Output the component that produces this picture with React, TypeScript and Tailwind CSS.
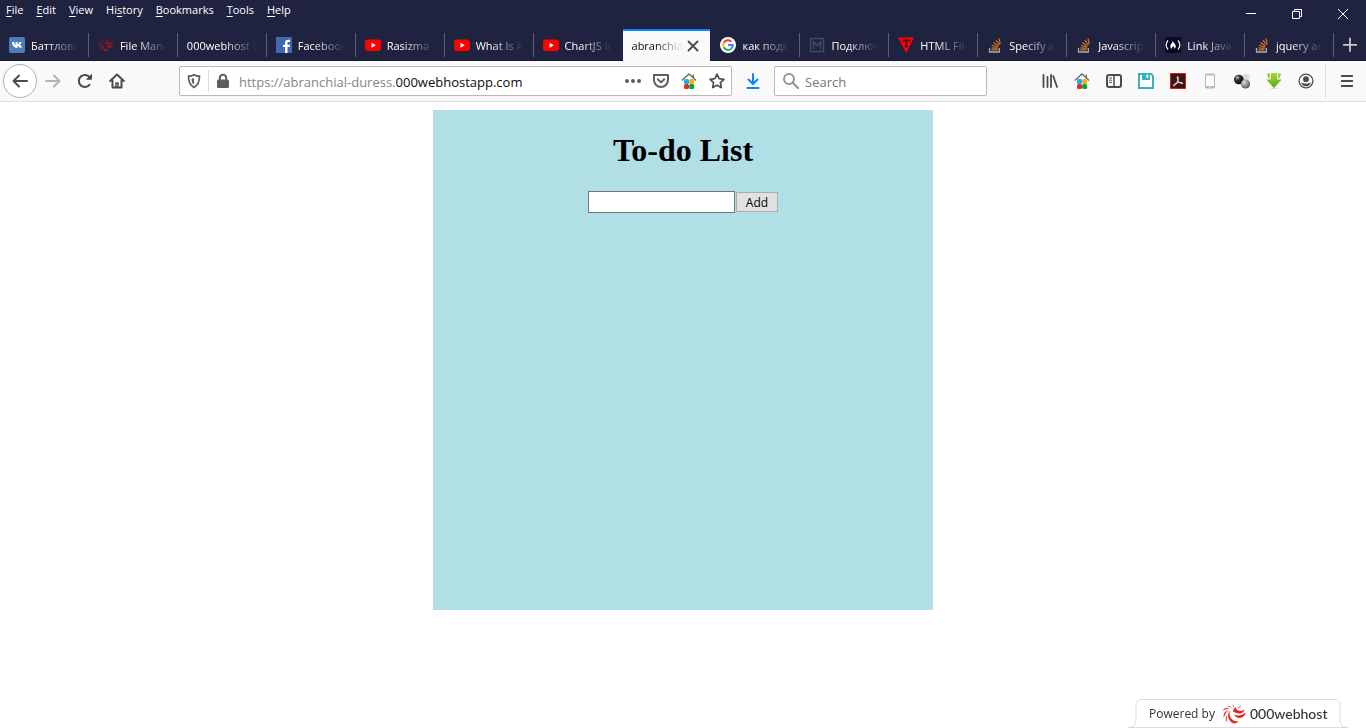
import type { ReactNode } from "react";

const UI = "font-['Open_Sans','Noto_Sans',sans-serif]";

/* ---------- favicons ---------- */

const Vk = () => (
  <svg viewBox="0 0 16 16" className="size-4 shrink-0">
    <rect width="16" height="16" rx="2" fill="#4d7db8" />
    <path d="M1.800 5h2.100c.2 1.600.9 2.700 1.400 2.900V5h2.200v2.300c.7-.2 1.500-1.300 1.800-2.300h2.100c-.3 1.200-1.100 2.100-1.900 2.600.9.4 1.800 1.400 2.200 3.200H9.400c-.4-1.100-1.100-1.900-1.900-2v2h-.6C4 10.800 1.900 8.800 1.800 5z" transform="translate(1.200)" fill="#fff" />
  </svg>
);

const Swirl = ({ className, color }: { className: string; color: string }) => (
  <svg viewBox="0 0 24 20" className={className} fill={color}>
    <path d="M8.500 6.500C6.800 9.300 7.400 12.800 9.600 15c1.600 1.600 3.800 2.500 6.700 2.300-1.300 2.500-4.400 2.700-6.600 1.100C5.700 15.600 4.700 9.800 8.500 6.500z" />
    <path d="M12.300 10.500c3 1.800 7.200 1.400 11.500-2-.9 3.600-3.400 5.500-6.400 5.500-2.500 0-4.500-1.300-5.100-3.500z" />
    <path d="M11 7.500c.4-2.200 1.500-3.500 2.700-4.400 0 2 1.500 3.400 3.600 3.700 1.900.3 3.800-.2 5.200-1.600-.6 3-2.700 4.300-5.300 4.200C14.800 9.300 13 8.600 11 7.500z" />
    <path d="M7 6.200C4 8.200 2.300 10.500 2 14 .7 10 2.800 6.800 7 6.200zM5.200 11c-.9 2.300-.7 4.800.3 7.200-2.200-1.700-2.400-5-.3-7.200zM7.800 5.200C5 4.500 2.500 5.200.6 7.300 1.800 4 4.800 2.900 7.800 5.200zM9.700 4.800C8.500 3 7 2.200 4.800 2.400c2.100-1.300 4.500-.2 4.900 2.400zM11.500 4.200C11.600 2.700 11 1.500 9.600.5c2.100.5 2.900 2.200 1.900 3.700zM15 3.200c1.700.2 3-.4 3.800-1.900.1 2.200-1.900 3.300-3.800 1.900z" />
  </svg>
);

const FacebookIcon = () => (
  <svg viewBox="0 0 16 16" className="size-4 shrink-0">
    <rect width="16" height="16" fill="#4267b2" />
    <path d="M9 16V10H7V7.700h2V6c0-2.200 1.200-3.300 3.200-3.300H14V5h-1.200c-1 0-1.300.4-1.300 1.300v1.400H14l-.4 2.300h-2.100v6z" fill="#fff" />
  </svg>
);

const Youtube = () => (
  <svg viewBox="0 0 16 16" className="size-4 shrink-0">
    <rect y="2.500" width="16" height="11.500" rx="3" fill="#f00" />
    <path d="M6.500 5.700v5l4.300-2.500z" fill="#fff" />
  </svg>
);

const Google = () => (
  <svg viewBox="0 0 16 16" className="size-4 shrink-0" fill="none" strokeWidth="2">
    <circle cx="8" cy="8" r="8" fill="#fff" />
    <path d="M11.500 4.600A4.900 4.900 0 0 0 3.700 5.700" stroke="#ea4335" />
    <path d="M3.700 5.700a4.900 4.900 0 0 0 0 4.600" stroke="#fbbc05" />
    <path d="M3.700 10.300a4.900 4.900 0 0 0 7.500 1.400" stroke="#34a853" />
    <path d="M11.200 11.700A4.900 4.900 0 0 0 12.800 8H8" stroke="#4285f4" />
  </svg>
);

const Metanit = () => (
  <svg viewBox="0 0 16 16" className="size-4 shrink-0" fill="none" stroke="#3f4e63">
    <path d="M1.500 1.500h13v13h-13z" strokeWidth="1.500" />
    <path d="M4.500 12V5L8 8.500 11.500 5v7" strokeWidth="1.600" />
  </svg>
);

const RedTriangle = () => (
  <svg viewBox="0 0 16 16" className="size-4 shrink-0">
    <path d="M0 .5h16L8.300 16z" fill="#f00" />
    <path d="M4.500 2.500h7.300v2.200h-1V3.900H9.200v5.300H10v1H6.500v-1h.8V3.900H5.600v.8H4.500z" fill="#3a0e22" />
  </svg>
);

const StackOverflow = () => (
  <svg viewBox="0 0 16 16" className="size-4 shrink-0" fill="none">
    <path d="M2.500 11v4h9.800v-4" stroke="#a9abb3" strokeWidth="1.300" />
    <path d="M4.300 12.800h6.200M4.500 10.800l6.200.6M5 8.200l5.900 2M6.500 5.500l5 3.700M9 3.200l3.400 4.800M12 1.500l1.200 5.500" stroke="#d9701f" strokeWidth="1.200" />
  </svg>
);

const Fcc = () => (
  <svg viewBox="0 0 16 16" className="size-4 shrink-0" fill="none" stroke="#fff">
    <rect width="16" height="16" fill="#0a0a23" stroke="none" />
    <path d="M3 3.500Q-.7 8 3 12.500M13 3.500Q16.700 8 13 12.500" strokeWidth="1.200" />
    <path d="M7.600 4c.8 1.600 3.200 3.200 3.200 5.300 0 1.200-.6 2-1.400 2.600.1-1.300-.4-2-1.200-2.900-.7.900-1.500 1.500-1.300 2.900C5 11 4.800 9 6 7.300 6.800 6.200 7.700 5.500 7.600 4z" fill="#fff" stroke="none" />
  </svg>
);

/* ---------- toolbar icons ---------- */

const Line = ({ children, color = "#4a4a4f", className = "size-4" }: { children: ReactNode; color?: string; className?: string }) => (
  <svg viewBox="0 0 16 16" className={`${className} shrink-0`} fill="none" stroke={color} strokeWidth="2" strokeLinecap="round" strokeLinejoin="round">
    {children}
  </svg>
);

const ColorHouse = () => (
  <svg viewBox="0 0 16 16" className="size-4 shrink-0">
    <path d="M.8 7.500L8 1l7.200 6.500M12.300 4.500V1.500" fill="none" stroke="#6a6a6a" strokeWidth="1.300" />
    <rect x="3" y="6" width="5" height="5" rx="1.500" fill="#12b0f0" />
    <rect x="8.200" y="6" width="5" height="5" rx="1.500" fill="#fbac12" />
    <rect x="3" y="11" width="5" height="5" rx="1.500" fill="#e22c1c" />
    <rect x="8.200" y="11" width="5" height="5" rx="1.500" fill="#12a03c" />
  </svg>
);

const Library = () => (
  <svg viewBox="0 0 16 16" className="size-4" fill="none" stroke="#4a4a4f" strokeLinecap="round">
    <path d="M1.500 2v12M5.500 4v10M9 2v12M11.300 3.200L15 14" strokeWidth="1.800" />
  </svg>
);

const SidebarIcon = () => (
  <Line>
    <rect x="1" y="2" width="14" height="12" rx="2" />
    <path d="M8 2v12" strokeWidth="1.500" />
    <path d="M3.500 5h2M3.500 7.200h2M3.500 9.400h2" strokeWidth="1" />
  </Line>
);

const Floppy = () => (
  <svg viewBox="0 0 16 16" className="size-4">
    <path d="M0 0h13.500L16 2.500V16H0z" fill="#36b3b7" />
    <path d="M2 2h2v5h8V2h.7L14 3.300V14H2z" fill="#fff" />
    <path d="M8.500 1.500h1.700v3.300H8.500z" fill="#fff" />
  </svg>
);

const Acrobat = () => (
  <svg viewBox="0 0 16 16" className="size-4" fill="none">
    <path d="M.5.500h15v15H.5z" fill="#3a1517" stroke="#cc1f12" />
    <path d="M3.500 12.800c-1-.9 1.600-2.400 4-2.900 2.600-.6 5.300-.5 5.200.5-.2 1.200-3.100-.6-4.500-2.900-1-1.600-1.400-4-.5-4 1.100 0 .4 3.300-.6 5.600-1 2.300-2.700 4.400-3.600 3.700z" stroke="#f1e9e9" strokeWidth="1" />
  </svg>
);

const Phone = () => (
  <svg viewBox="0 0 16 16" className="size-4">
    <rect x="3" y=".5" width="10" height="15" rx="1.500" fill="#b9b9b9" />
    <path d="M4 2.500h8v10.500H4z" fill="#fdfdfd" />
    <circle cx="8" cy="14.200" r=".7" fill="#f4f4f4" />
  </svg>
);

const Balls = () => (
  <svg viewBox="0 0 16 16" className="size-4">
    <defs>
      <radialGradient id="ball-dark" cx=".35" cy=".3" r=".7"><stop offset="0" stopColor="#bbb" /><stop offset=".4" stopColor="#333" /><stop offset="1" stopColor="#0c0c0c" /></radialGradient>
      <radialGradient id="ball-mid" cx=".35" cy=".3" r=".8"><stop offset="0" stopColor="#ddd" /><stop offset="1" stopColor="#494949" /></radialGradient>
    </defs>
    <circle cx="12" cy="4.500" r="3.700" fill="#dedede" />
    <circle cx="4.800" cy="6.500" r="4.800" fill="url(#ball-dark)" />
    <circle cx="11.500" cy="11" r="4.600" fill="url(#ball-mid)" />
  </svg>
);

const GreenArrow = () => (
  <svg viewBox="0 0 16 16" className="size-4">
    <defs>
      <linearGradient id="arrow-green" x2="0" y2="1"><stop offset="0" stopColor="#a5d936" /><stop offset="1" stopColor="#63a512" /></linearGradient>
    </defs>
    <ellipse cx="8" cy="15.300" rx="4" ry=".6" fill="#d5d5d5" />
    <path d="M4.800 0h6.400v6.500h4.600L8 15 .2 6.500h4.600z" fill="url(#arrow-green)" />
    <path d="M1 .5h2.800v4.800H2.500zM15 .5h-2.800v4.800h1.300z" fill="#91c82c" />
  </svg>
);

const Account = () => (
  <svg viewBox="0 0 16 16" className="size-4">
    <circle cx="8" cy="8" r="6.900" fill="none" stroke="#4a4a4f" strokeWidth="1.300" />
    <circle cx="8" cy="6.200" r="2.900" fill="#4a4a4f" />
    <path d="M3.300 9.300c1 1 2.800 1.400 4.700 1.400s3.700-.4 4.700-1.400c-.2 2.500-2.200 4-4.700 4s-4.500-1.500-4.700-4z" fill="#4a4a4f" />
  </svg>
);

/* ---------- data ---------- */

const menus: [string, string, string][] = [
  ["", "F", "ile"],
  ["", "E", "dit"],
  ["", "V", "iew"],
  ["Hi", "s", "tory"],
  ["", "B", "ookmarks"],
  ["", "T", "ools"],
  ["", "H", "elp"],
];

const tabs: { title: string; icon?: ReactNode; active?: boolean }[] = [
  { title: "Баттловы", icon: <Vk /> },
  { title: "File Mana", icon: <Swirl className="h-4 w-4 shrink-0" color="#b80d14" /> },
  { title: "000webhost F" },
  { title: "Facebook", icon: <FacebookIcon /> },
  { title: "Rasizmə Y", icon: <Youtube /> },
  { title: "What Is A", icon: <Youtube /> },
  { title: "ChartJS in", icon: <Youtube /> },
  { title: "abranchial", active: true },
  { title: "как подкл", icon: <Google /> },
  { title: "Подключ", icon: <Metanit /> },
  { title: "HTML File", icon: <RedTriangle /> },
  { title: "Specify a", icon: <StackOverflow /> },
  { title: "Javascrip", icon: <StackOverflow /> },
  { title: "Link Java", icon: <Fcc /> },
  { title: "jquery an", icon: <StackOverflow /> },
];

const extensions: [string, ReactNode][] = [
  ["Library", <Library />],
  ["Start page", <ColorHouse />],
  ["Sidebars", <SidebarIcon />],
  ["Save", <Floppy />],
  ["Adobe Acrobat", <Acrobat />],
  ["Mobile view", <Phone />],
  ["Proxy", <Balls />],
  ["Video downloader", <GreenArrow />],
  ["Account", <Account />],
];

const ToolButton = ({ label, children, className = "w-8" }: { label: string; children: ReactNode; className?: string }) => (
  <button type="button" aria-label={label} className={`flex h-8 shrink-0 items-center justify-center ${className}`}>
    {children}
  </button>
);

function TitleBar() {
  return (
    <div className="flex h-[29px] items-start justify-between text-white">
      <nav className="flex gap-[13px] pl-1.5 pt-0.5 text-[11px] leading-4">
        {menus.map(([before, key, after]) => (
          <button type="button" key={before + key + after}>
            {before}
            <span className="underline underline-offset-2">{key}</span>
            {after}
          </button>
        ))}
      </nav>
      <div className="flex h-7">
        {[
          ["Minimize", "M3 7.500h10"],
          ["Restore", "M3.500 5.500h7v7h-7zM5.500 5.500v-2h7v7h-2"],
          ["Close", "M3 3l10 10M13 3L3 13"],
        ].map(([label, d]) => (
          <button type="button" key={label} aria-label={label} className="flex w-[46px] items-center justify-center">
            <svg viewBox="0 0 16 16" className="size-4" fill="none" stroke="#fff"><path d={d} /></svg>
          </button>
        ))}
      </div>
    </div>
  );
}

function TabStrip() {
  return (
    <div className="flex h-8 text-[11px] leading-4">
      <div role="tablist" className="grid min-w-0 flex-1 grid-cols-[repeat(15,minmax(0,1fr))]">
        {tabs.map((tab, i) =>
          tab.active ? (
            <div key={i} className="mr-px flex items-center border-t-2 border-[#0a84ff] bg-[#f9f9fa] pl-[9px] pr-[9px] text-[#0c0c0d]">
              <button type="button" role="tab" aria-selected="true" className="min-w-0 flex-1 overflow-hidden whitespace-nowrap text-left [mask-image:linear-gradient(to_left,transparent,black_28px)]">
                {tab.title}
              </button>
              <button type="button" aria-label="Close tab" className="shrink-0 pl-0.5">
                <svg viewBox="0 0 16 16" className="size-4" fill="none" stroke="#4a4a4f" strokeWidth="1.800" strokeLinecap="round"><path d="M3.500 3.500l9 9M12.500 3.500l-9 9" /></svg>
              </button>
            </div>
          ) : (
            <div key={i} className="flex items-center border-b border-[#15172e] text-white">
              <button type="button" role="tab" aria-selected="false" className="flex min-w-0 flex-1 items-center gap-1.5 pl-[9px] pr-2.5 text-left">
                {tab.icon}
                <span className="min-w-0 flex-1 overflow-hidden whitespace-nowrap pt-0.5 [mask-image:linear-gradient(to_left,transparent,black_32px)]">{tab.title}</span>
              </button>
              <span className={`h-6 w-px shrink-0 ${tabs[i + 1]?.active ? "bg-transparent" : "bg-[#5c5e76]"}`} />
            </div>
          ),
        )}
      </div>
      <button type="button" aria-label="New tab" className="flex w-8 shrink-0 items-center justify-center border-b border-[#15172e]">
        <svg viewBox="0 0 16 16" className="size-4" fill="none" stroke="#c8c9d2" strokeWidth="1.800" strokeLinecap="round"><path d="M8 1.500v12.500M1.700 7.800h12.600" /></svg>
      </button>
    </div>
  );
}

function Toolbar() {
  return (
    <div className="flex h-[41px] items-center border-b border-[#e0e0e1] bg-[#f9f9fa] px-[3px] text-[13px] leading-5">
      <button type="button" aria-label="Back" className="flex size-[34px] shrink-0 items-center justify-center rounded-full border border-[#b1b1b3] bg-white">
        <Line><path d="M15 8H1.500M7 2.500L1.500 8 7 13.500" /></Line>
      </button>
      <ToolButton label="Forward"><Line color="#b3b3b6"><path d="M1 8h13.500M9 2.500L14.500 8 9 13.500" /></Line></ToolButton>
      <ToolButton label="Reload">
        <Line><path d="M12.500 11.800A6 6 0 1 1 12.800 4.500" /><path d="M14.500 1.800V6.200h-4.400z" fill="#4a4a4f" strokeWidth="1" /></Line>
      </ToolButton>
      <ToolButton label="Home">
        <Line><path d="M1.200 8L8 1.500 14.800 8M3.500 7.500V14.500h9V7.500" /><path d="M7 14.500v-4.500h2v4.500" strokeWidth="1.500" /></Line>
      </ToolButton>
      <div className="ml-[46px] mr-[5px] flex h-[30px] min-w-0 flex-1 items-center rounded-xs border border-[#b9b9ba] bg-white">
        <ToolButton label="Tracking protection" className="w-7">
          <svg viewBox="0 0 16 16" className="size-4" fill="none" stroke="#5e5e62">
            <path d="M2.500 3.200Q6 3.200 8 1.800q2 1.400 5.500 1.400c0 5-.8 8.500-5.500 11.200C3.300 11.700 2.500 8.200 2.500 3.200z" strokeWidth="1.700" />
            <path d="M8 5v6.500C6.200 10.200 5.600 8.500 5.500 5.700 6.500 5.600 7.300 5.400 8 5z" fill="#5e5e62" stroke="none" />
          </svg>
        </ToolButton>
        <span className="h-[22px] w-px bg-[#dcdcdd]" />
        <ToolButton label="Site information" className="w-7">
          <svg viewBox="0 0 16 16" className="size-4"><rect x="2" y="6.500" width="12" height="8.500" rx="1.500" fill="#5e5e62" /><path d="M4.800 7V5a3.200 3.200 0 0 1 6.400 0v2" fill="none" stroke="#5e5e62" strokeWidth="2" /></svg>
        </ToolButton>
        <a href="https://abranchial-duress.000webhostapp.com" className="ml-0.5 min-w-0 flex-1 overflow-hidden whitespace-nowrap pt-px text-[#85858a]">
          https://abranchial-duress.<span className="text-[#0c0c0d]">000webhostapp.com</span>
        </a>
        <ToolButton label="Page actions" className="w-7">
          <svg viewBox="0 0 16 16" className="size-4" fill="#5e5e62"><circle cx="2" cy="8" r="2" /><circle cx="8" cy="8" r="2" /><circle cx="14" cy="8" r="2" /></svg>
        </ToolButton>
        <ToolButton label="Save to Pocket" className="w-7">
          <Line color="#5e5e62"><path d="M1 2h14v5a7 7 0 0 1-14 0z" /><path d="M4.800 6.300L8 9.400l3.200-3.100" /></Line>
        </ToolButton>
        <ToolButton label="Start page" className="w-7"><ColorHouse /></ToolButton>
        <ToolButton label="Bookmark this page" className="w-7">
          <Line color="#4f4f53"><path d="M8 1.200l2.100 4.500 4.800.6-3.500 3.400.9 4.900L8 12.200l-4.300 2.400.9-4.900L1.100 6.300l4.800-.6z" strokeWidth="1.700" /></Line>
        </ToolButton>
      </div>
      <ToolButton label="Downloads">
        <Line color="#0a84ff"><path d="M8 1v9.500M3.500 6.500L8 11l4.500-4.500M2.500 15h11" /></Line>
      </ToolButton>
      <label className="ml-[5px] mr-[47px] flex h-[30px] w-[213px] shrink-0 items-center rounded-xs border border-[#b9b9ba] bg-white pl-2">
        <svg viewBox="0 0 16 16" className="size-4 shrink-0" fill="none" stroke="#959598" strokeWidth="2"><circle cx="6" cy="6" r="5" /><path d="M9.800 9.800L15 15" strokeLinecap="round" strokeWidth="2.300" /></svg>
        <input type="search" aria-label="Search" placeholder="Search" className="ml-1.5 w-full min-w-0 bg-transparent pt-px text-[#0c0c0d] outline-none placeholder:text-[#77777a]" />
      </label>
      {extensions.map(([label, icon]) => (
        <ToolButton key={label} label={label}>{icon}</ToolButton>
      ))}
      <span className="ml-[3px] mr-[5px] h-[34px] w-px shrink-0 bg-[#dcdcdd]" />
      <ToolButton label="Open menu">
        <Line><path d="M2.800 3h10.400M2.800 8h10.400M2.800 13h10.400" /></Line>
      </ToolButton>
    </div>
  );
}

function HostBadge() {
  return (
    <a href="https://www.000webhost.com" className="fixed bottom-0 right-[18px] flex h-[30px] w-[220px] items-center pl-[21px] pt-0.5 text-[12px] leading-4 text-[#333]">
      <svg viewBox="0 0 220 30" className="absolute inset-0 h-full w-full" fill="#fff" stroke="#dcdcdc">
        <path d="M0 29.500Q8 29.500 8 22V7Q8 1.500 14 1.500H206Q212 1.500 212 7V22Q212 29.500 220 29.500z" />
      </svg>
      <span className="relative">Powered by</span>
      <Swirl className="relative ml-[7px] h-5 w-6 shrink-0" color="#df2b20" />
      <span className="relative ml-1 font-['Lato',sans-serif] text-[14px] font-medium">000webhost</span>
    </a>
  );
}

export default function App() {
  return (
    <div className={`min-h-screen bg-white ${UI}`}>
      <header>
        <div className="bg-[#202340]">
          <TitleBar />
          <TabStrip />
        </div>
        <Toolbar />
      </header>
      <main className="pt-2">
        <section className="mx-auto h-[500px] max-w-[500px] bg-[#b0dfe5] pt-[22px]">
          <h1 className="text-center font-['Liberation_Serif',serif] text-[32px] font-bold leading-[37px] text-black">To-do List</h1>
          <form className="mt-[22px] flex items-center justify-center gap-px" onSubmit={(e) => e.preventDefault()}>
            <input type="text" aria-label="New task" className="h-[22px] w-[147px] border border-[#767676] bg-white px-1 text-[13px]" />
            <button type="submit" className="h-5 w-[42px] border border-[#adadad] bg-[#e1e1e1] pt-px text-[12px] leading-4 text-black">Add</button>
          </form>
        </section>
      </main>
      <HostBadge />
    </div>
  );
}
